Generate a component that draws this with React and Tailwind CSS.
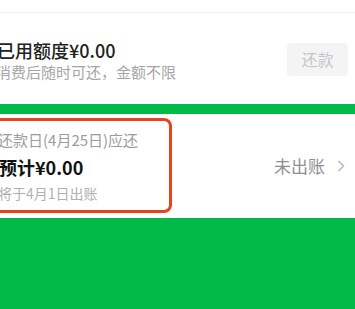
export default function App() {
  const font = { fontFamily: '"Noto Sans CJK SC", "Noto Sans", sans-serif' };
  return (
    <div className="w-[355px] h-[309px] bg-white overflow-hidden flex flex-col" style={font}>
      <div className="h-[13px] border-b border-[#f3f3f3] shrink-0" />
      <div className="h-[91px] flex items-center justify-between shrink-0">
        <div className="ml-[-3px] pt-[3px] flex flex-col">
          <div className="text-[18px] leading-[22px] font-medium text-[#222]">已用额度¥0.00</div>
          <div className="text-[15px] leading-[20px] text-[#a6a6a6] mt-[1px] ml-[-1px]">消费后随时可还，金额不限</div>
        </div>
        <div className="mr-[7px] w-[61px] h-[33px] rounded-[4px] bg-[#f4f4f4] text-[#c6c6c6] text-[16px] flex items-center justify-center mt-[1px]">
          还款
        </div>
      </div>
      <div className="h-[10px] bg-[#00b946] shrink-0" />
      <div className="h-[104px] bg-white flex items-start justify-between shrink-0">
        <div className="ml-[-10px] mt-[4px] w-[182px] h-[95px] border-[3px] border-[#e8431d] rounded-[8px] pl-[6px] pt-[9px] flex flex-col">
          <div className="text-[15px] leading-[20px] text-[#9c9c9c] ml-[-1px]">还款日(4月25日)应还</div>
          <div className="text-[18px] leading-[26px] font-bold text-[#111] mt-[4px]">预计¥0.00</div>
          <div className="text-[14px] leading-[20px] text-[#b0b0b0] mt-[3px] ml-[-1px]">将于4月1日出账</div>
        </div>
        <div className="self-center flex items-center mr-[10px] mt-[-1px]">
          <span className="text-[17px] leading-[24px] text-[#8f8f8f]">未出账</span>
          <svg width="8" height="12" viewBox="0 0 8 12" className="ml-[12px]">
            <path d="M1.5 1 L6.5 6 L1.5 11" fill="none" stroke="#b8b8b8" strokeWidth="1.5" />
          </svg>
        </div>
      </div>
      <div className="flex-1 bg-[#00b946]" />
    </div>
  );
}
